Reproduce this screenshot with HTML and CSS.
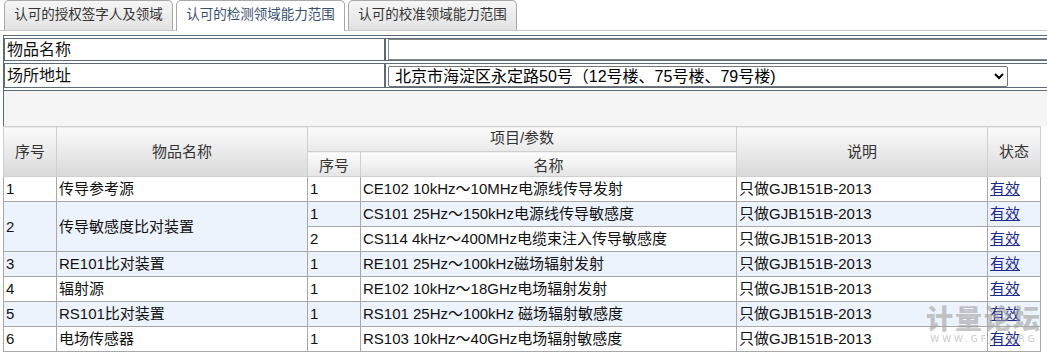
FILE: index.html
```html
<!DOCTYPE html>
<html lang="zh-CN">
<head>
    <meta charset="UTF-8">
    <title>认可的检测领域能力范围</title>
    <link rel="stylesheet" href="styles.css">
</head>
<body>
    <div class="tabs">
        <a href="#" class="tab">认可的授权签字人及领域</a>
        <a href="#" class="tab active">认可的检测领域能力范围</a>
        <a href="#" class="tab">认可的校准领域能力范围</a>
    </div>

    <table class="query">
        <tr>
            <td class="query-label">物品名称</td>
            <td class="query-field"><input type="text" class="text-input"></td>
        </tr>
        <tr>
            <td class="query-label">场所地址</td>
            <td class="query-field">
                <select class="site-select">
                    <option>北京市海淀区永定路50号（12号楼、75号楼、79号楼)</option>
                </select>
            </td>
        </tr>
    </table>
    <div class="query-blank"></div>

    <table class="scope">
        <colgroup>
            <col style="width:53px">
            <col style="width:251px">
            <col style="width:53px">
            <col style="width:376px">
            <col style="width:251px">
            <col style="width:53px">
        </colgroup>
        <thead>
            <tr class="head-top">
                <th rowspan="2">序号</th>
                <th rowspan="2">物品名称</th>
                <th colspan="2" class="group">项目/参数</th>
                <th rowspan="2">说明</th>
                <th rowspan="2">状态</th>
            </tr>
            <tr class="head-sub">
                <th>序号</th>
                <th>名称</th>
            </tr>
        </thead>
        <tbody>
            <tr>
                <td>1</td>
                <td>传导参考源</td>
                <td>1</td>
                <td>CE102 10kHz～10MHz电源线传导发射</td>
                <td>只做GJB151B-2013</td>
                <td><a href="#">有效</a></td>
            </tr>
            <tr class="alt">
                <td rowspan="2">2</td>
                <td rowspan="2">传导敏感度比对装置</td>
                <td>1</td>
                <td>CS101 25Hz～150kHz电源线传导敏感度</td>
                <td>只做GJB151B-2013</td>
                <td><a href="#">有效</a></td>
            </tr>
            <tr>
                <td>2</td>
                <td>CS114 4kHz～400MHz电缆束注入传导敏感度</td>
                <td>只做GJB151B-2013</td>
                <td><a href="#">有效</a></td>
            </tr>
            <tr class="alt">
                <td>3</td>
                <td>RE101比对装置</td>
                <td>1</td>
                <td>RE101 25Hz～100kHz磁场辐射发射</td>
                <td>只做GJB151B-2013</td>
                <td><a href="#">有效</a></td>
            </tr>
            <tr>
                <td>4</td>
                <td>辐射源</td>
                <td>1</td>
                <td>RE102 10kHz～18GHz电场辐射发射</td>
                <td>只做GJB151B-2013</td>
                <td><a href="#">有效</a></td>
            </tr>
            <tr class="alt">
                <td>5</td>
                <td>RS101比对装置</td>
                <td>1</td>
                <td>RS101 25Hz～100kHz 磁场辐射敏感度</td>
                <td>只做GJB151B-2013</td>
                <td><a href="#">有效</a></td>
            </tr>
            <tr>
                <td>6</td>
                <td>电场传感器</td>
                <td>1</td>
                <td>RS103 10kHz～40GHz电场辐射敏感度</td>
                <td>只做GJB151B-2013</td>
                <td><a href="#">有效</a></td>
            </tr>
        </tbody>
    </table>

    <div class="watermark">
        <span class="watermark-title">计量论坛</span>
        <span class="watermark-url">WWW.GFJL.ORG</span>
    </div>
</body>
</html>
```

FILE: styles.css
```css
* {
    box-sizing: border-box;
}
html, body {
    margin: 0;
    padding: 0;
    overflow: hidden;
}
body {
    font-family: 'Liberation Sans', 'Noto Sans CJK SC', sans-serif;
    font-size: 15px;
    color: #111;
    background-color: #fff;
    position: relative;
    width: 1047px;
    height: 354px;
}

/* tabs */
.tabs {
    display: flex;
    gap: 3px;
    align-items: flex-end;
    height: 31px;
    padding-left: 4px;
    border-bottom: 1px solid #c8c8c8;
}
.tab {
    width: 169px;
    height: 30px;
    line-height: 28px;
    text-align: center;
    font-size: 13.5px;
    color: #333;
    text-decoration: none;
    border: 1px solid #a8a8a8;
    border-bottom: none;
    border-radius: 5px 5px 0 0;
    background: linear-gradient(#f6f6f6, #e2e2e2);
}
.tab.active {
    height: 31px;
    margin-bottom: -1px;
    color: #37516e;
    background: #fff;
}

/* query form */
.query {
    margin-top: 4px;
    margin-left: 3px;
    width: 1080px;
    border: 1px solid #5c6b7a;
    border-bottom: none;
    border-spacing: 0 2px;
}
.query td {
    border: 1px solid #5c6b7a;
    padding: 0;
    font-size: 16px;
    line-height: 20px;
    height: 23px;
}
.query-label {
    width: 381px;
    padding-left: 2px !important;
}
.query tr + tr td {
    height: 25px;
}
.text-input {
    display: block;
    width: 100%;
    height: 21px;
    margin: 0 0 0 2px;
    border: 1px solid #8a8a8a;
    font-size: 15px;
}
.site-select {
    display: block;
    margin: 2px 0 0 2px;
    width: 620px;
    height: 21px;
    font-family: 'Liberation Sans', 'Noto Sans CJK SC', sans-serif;
    font-size: 16px;
    color: #000;
    border: 1px solid #767676;
    border-radius: 2px;
    background: #fff;
    padding: 0 2px;
}
.query-blank {
    margin-left: 3px;
    height: 36px;
    background: #f5f5f5;
    border-top: 1px solid #5c6b7a;
    border-left: 1px solid #5c6b7a;
}

/* scope table */
.scope {
    margin-left: 3px;
    width: 1038px;
    table-layout: fixed;
    border-collapse: collapse;
    border: 1px solid #8e8e8e;
    border-top: 1px solid #5c6b7a;
}
.scope th {
    font-weight: normal;
    color: #333;
    font-size: 15px;
    line-height: 18px;
    border: 1px solid #cfcfcf;
    background: linear-gradient(#fbfbfb, #d9d9d9);
    padding: 0;
}
.scope .head-top th {
    height: 25px;
}
.scope .head-top th.group {
    background: linear-gradient(#fbfbfb, #e9e9e9);
    vertical-align: top;
    padding-top: 2px;
}
.scope .head-sub th {
    height: 25px;
    padding-top: 3px;
    background: linear-gradient(#fdfdfd, #e4e4e4);
}
.scope td {
    height: 25px;
    line-height: 18px;
    padding: 0 2px;
    border: 1px solid #a8a8a8;
    white-space: nowrap;
    overflow: hidden;
    background: #fff;
}
.scope tr.alt td {
    background: #edf3fc;
}
.scope td a {
    color: #1c2a8c;
    text-decoration: underline;
}

/* watermark */
.watermark {
    position: absolute;
    left: 926px;
    top: 302px;
    display: flex;
    flex-direction: column;
    align-items: center;
    white-space: nowrap;
    pointer-events: none;
    color: rgba(160, 160, 160, 0.6);
}
.watermark-title {
    font-family: 'Noto Sans CJK SC', sans-serif;
    font-weight: 900;
    font-size: 27px;
    line-height: 32px;
    letter-spacing: 2px;
}
.watermark-url {
    font-family: 'DejaVu Sans', sans-serif;
    font-size: 9px;
    letter-spacing: 3px;
    line-height: 10px;
}
```
